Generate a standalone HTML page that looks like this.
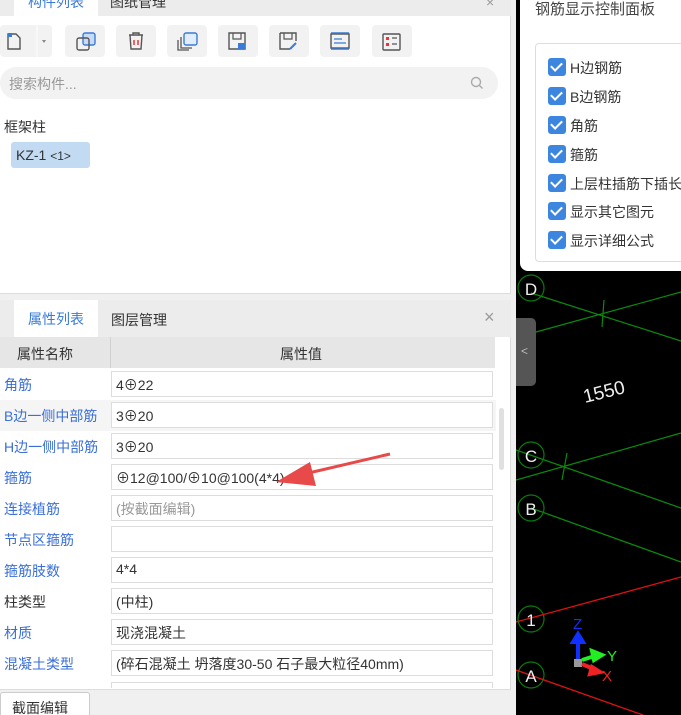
<!DOCTYPE html><html><head><meta charset="utf-8"><style>
*{box-sizing:border-box;margin:0;padding:0}
html{overflow:hidden;width:681px;height:715px}
body{width:681px;height:715px;overflow:hidden;position:relative;background:#000;font-family:"Liberation Sans","Noto Sans CJK SC",sans-serif;font-size:14px;color:#333}
.abs{position:absolute}
.left{left:0;top:0;width:516px;height:715px;background:#f0f0f0}
.p1{left:0;top:0;width:511px;height:294px;background:#fff;border-right:1px solid #ddd;border-bottom:1px solid #ddd}
.tabbar{left:0;width:511px;background:#ececec}
.tab{position:absolute;top:0;height:100%;background:#fff;color:#3a7bd5;font-size:14px;text-align:center}
.btn{position:absolute;top:25px;width:40px;height:32px;background:#f2f2f2;border-radius:4px}
.row{position:absolute;left:0;width:496px;height:31px}
.row .n{position:absolute;left:4px;top:6px;color:#3a6fd8;font-size:14px}
.row .v{position:absolute;left:111px;top:2px;width:382px;height:26px;border:1px solid #ddd;background:#fff;padding:3px 4px;font-size:14px;color:#333}
.cb{position:absolute;left:548px;width:18px;height:18px;background:#3d86e0;border-radius:3px}
.cb::after{content:"";position:absolute;left:5px;top:2px;width:5px;height:9px;border:solid #fff;border-width:0 2px 2px 0;transform:rotate(45deg)}
.cl{position:absolute;left:570px;font-size:14px;color:#333}
</style></head><body>
<div class="abs left"></div>
<div class="abs p1"></div>
<div class="abs tabbar" style="top:0;height:16px"><div class="tab" style="left:14px;width:84px;top:-8px;height:24px;line-height:20px">构件列表</div><span class="abs" style="left:110px;top:-8px;color:#333">图纸管理</span><span class="abs" style="left:486px;top:-6px;color:#999">×</span></div>
<div class="btn" style="left:0;width:52px"><svg width="52" height="32"><path d="M8 9h8l4 4v11H8z" fill="none" stroke="#555" stroke-width="1.4"/><rect x="8" y="8" width="4" height="4" fill="#3a7bd5"/><path d="M42 15l2 3 2-3z" fill="#888"/><line x1="37" y1="0" x2="37" y2="32" stroke="#fff"/></svg></div>
<div class="btn" style="left:65px"><svg width="40" height="32"><rect x="18" y="8" width="12" height="12" rx="2" fill="#c5dbf7" stroke="#3a7bd5" stroke-width="1.4"/><rect x="12" y="13" width="12" height="12" rx="2" fill="none" stroke="#555" stroke-width="1.4"/></svg></div>
<div class="btn" style="left:116px"><svg width="40" height="32"><path d="M13 10h14M17 10v-2h6v2M14 10l1 14h10l1-14" fill="none" stroke="#555" stroke-width="1.4"/><path d="M18 15v5M22 15v5" stroke="#e33" stroke-width="1.5"/></svg></div>
<div class="btn" style="left:167px"><svg width="40" height="32"><rect x="17" y="8" width="13" height="12" rx="2" fill="#e1edfc" stroke="#3a7bd5" stroke-width="1.4"/><path d="M14 12v11h11M11 15v10h11" fill="none" stroke="#555" stroke-width="1.3"/></svg></div>
<div class="btn" style="left:218px"><svg width="40" height="32"><path d="M11 8h16v16H11z" fill="none" stroke="#555" stroke-width="1.4"/><path d="M15 8v6h8V8" fill="none" stroke="#555" stroke-width="1.2"/><rect x="20" y="18" width="7" height="6" fill="#3a7bd5"/></svg></div>
<div class="btn" style="left:269px"><svg width="40" height="32"><path d="M11 8h16v8M11 8v16h10" fill="none" stroke="#555" stroke-width="1.4"/><path d="M15 8v6h8V8" fill="none" stroke="#555" stroke-width="1.2"/><path d="M21 24l6-6" stroke="#3a7bd5" stroke-width="2"/></svg></div>
<div class="btn" style="left:320px"><svg width="40" height="32"><rect x="11" y="9" width="18" height="14" fill="none" stroke="#555" stroke-width="1.4"/><path d="M11 8h18M11 24h18" stroke="#3a7bd5" stroke-width="1.5"/><path d="M14 14h8M14 18h12" stroke="#3a7bd5" stroke-width="1.3"/></svg></div>
<div class="btn" style="left:372px"><svg width="40" height="32"><rect x="11" y="9" width="17" height="16" rx="1" fill="none" stroke="#555" stroke-width="1.4"/><rect x="14" y="12" width="3" height="3" fill="#e33"/><rect x="14" y="18" width="3" height="3" fill="#e33"/><path d="M20 13h5M20 19h5" stroke="#555" stroke-width="1.3"/></svg></div>
<div class="abs" style="left:0;top:67px;width:498px;height:32px;background:#f2f2f2;border-radius:16px"><span class="abs" style="left:9px;top:7px;color:#999;font-size:14px">搜索构件...</span><svg class="abs" style="left:470px;top:9px" width="14" height="14"><circle cx="6" cy="6" r="4.5" fill="none" stroke="#aaa" stroke-width="1.4"/><path d="M9.5 9.5l3 3" stroke="#aaa" stroke-width="1.4"/></svg></div>
<div class="abs" style="left:4px;top:117px;font-size:14px">框架柱</div>
<div class="abs" style="left:11px;top:142px;width:79px;height:26px;background:#c2daf2;border-radius:3px;padding:5px 0 0 5px;font-size:14px">KZ-1 <span style="font-size:12px">&lt;1&gt;</span></div>
<div class="abs" style="left:0;top:300px;width:511px;height:390px;background:#fff;border-right:1px solid #ddd;border-bottom:1px solid #ddd"></div>
<div class="abs tabbar" style="top:300px;height:37px"><div class="tab" style="left:14px;width:84px;line-height:38px">属性列表</div><span class="abs" style="left:111px;top:10px;color:#333">图层管理</span><span class="abs" style="left:484px;top:7px;color:#999;font-size:18px">×</span></div>
<div class="abs" style="left:0;top:337px;width:495px;height:31px;background:#e6e6e6"><span class="abs" style="left:17px;top:7px">属性名称</span><span class="abs" style="left:110px;top:0;width:1px;height:31px;background:#d0d0d0"></span><span class="abs" style="left:280px;top:7px">属性值</span></div>
<div class="abs" style="left:499px;top:408px;width:5px;height:62px;background:#e0e0e0;border-radius:3px"></div>
<div class="row" style="top:369px"><span class="n">角筋</span><div class="v">4⊕22</div></div>
<div class="row" style="top:400px;background:#f5f5f5"><span class="n">B边一侧中部筋</span><div class="v">3⊕20</div></div>
<div class="row" style="top:431px"><span class="n">H边一侧中部筋</span><div class="v">3⊕20</div></div>
<div class="row" style="top:462px"><span class="n">箍筋</span><div class="v">⊕12@100/⊕10@100(4*4)</div></div>
<div class="row" style="top:493px"><span class="n">连接植筋</span><div class="v" style="color:#999">(按截面编辑)</div></div>
<div class="row" style="top:524px"><span class="n">节点区箍筋</span><div class="v"></div></div>
<div class="row" style="top:555px"><span class="n">箍筋肢数</span><div class="v">4*4</div></div>
<div class="row" style="top:586px"><span class="n" style="color:#333">柱类型</span><div class="v">(中柱)</div></div>
<div class="row" style="top:617px"><span class="n">材质</span><div class="v">现浇混凝土</div></div>
<div class="row" style="top:648px"><span class="n">混凝土类型</span><div class="v">(碎石混凝土 坍落度30-50 石子最大粒径40mm)</div></div>
<div class="abs" style="left:111px;top:682px;width:382px;height:6px;border:1px solid #ddd;border-bottom:none"></div>
<div class="abs" style="left:0;top:692px;width:90px;height:23px;background:#fff;border:1px solid #ccc;border-bottom:none;border-radius:3px 3px 0 0;padding:5px 0 0 11px;overflow:hidden">截面编辑</div>
<svg class="abs" style="left:270px;top:450px" width="130" height="40"><path d="M120 4L30 25" stroke="#e84a4a" stroke-width="3"/><path d="M6 32L40 12L46 36z" fill="#e84a4a"/></svg>
<svg class="abs" style="left:516px;top:0" width="165" height="715">
<g stroke="#0b8a0b" stroke-width="1.2" fill="none">
<path d="M15 293L165 341M20 332L165 292M88 300L86 327"/>
<path d="M0 450L165 508M0 480L165 433M51 453L46 480M15 508L165 562"/>
<g stroke="#0a7a0a"><circle cx="15" cy="288" r="13"/><circle cx="15" cy="455" r="13"/><circle cx="15" cy="508" r="13"/><circle cx="15" cy="619" r="13"/><circle cx="15" cy="675" r="13"/></g>
</g>
<path d="M0 622L165 577M0 670L127 715" stroke="#d11" stroke-width="1.3"/>
<g fill="#eee" font-family="Liberation Sans" font-size="17" text-anchor="middle"><text x="15" y="295">D</text><text x="15" y="462">C</text><text x="15" y="515">B</text><text x="15" y="626">1</text><text x="15" y="682">A</text></g>
<text x="69" y="403" fill="#eee" font-family="Liberation Sans" font-size="19" transform="rotate(-14 69 403)">1550</text>
<text x="57" y="629" fill="#1030ff" font-family="Liberation Sans" font-size="15">Z</text>
<path d="M62 660V638M57 642l5-8 5 8z" stroke="#1030ff" stroke-width="4" fill="#1030ff"/>
<rect x="58" y="659" width="8" height="8" fill="#999"/>
<path d="M66 660l16-5M76 651l10 4-8 5z" stroke="#2e2" stroke-width="4" fill="#2e2"/>
<path d="M66 664l14 6M76 667l8 5-10 2z" stroke="#e22" stroke-width="4" fill="#e22"/>
<text x="91" y="661" fill="#2e2" font-family="Liberation Sans" font-size="15">Y</text>
<text x="86" y="681" fill="#e22" font-family="Liberation Sans" font-size="15">X</text>
</svg>
<div class="abs" style="left:516px;top:318px;width:20px;height:68px;background:#555;border-radius:0 5px 5px 0;color:#bbb;font-size:12px;padding:26px 0 0 5px">&lt;</div>
<div class="abs" style="left:520px;top:0;width:161px;height:271px;background:#fff;border-radius:0 0 0 8px"></div>
<div class="abs" style="left:535px;top:-2px;font-size:15px;color:#444">钢筋显示控制面板</div>
<div class="abs" style="left:535px;top:43px;width:150px;height:219px;border:1px solid #ddd;border-radius:4px"></div>
<div class="cb" style="top:58px"></div><div class="cl" style="top:58px">H边钢筋</div>
<div class="cb" style="top:87px"></div><div class="cl" style="top:87px">B边钢筋</div>
<div class="cb" style="top:116px"></div><div class="cl" style="top:116px">角筋</div>
<div class="cb" style="top:145px"></div><div class="cl" style="top:145px">箍筋</div>
<div class="cb" style="top:174px"></div><div class="cl" style="top:174px;white-space:nowrap">上层柱插筋下插长</div>
<div class="cb" style="top:202px"></div><div class="cl" style="top:202px">显示其它图元</div>
<div class="cb" style="top:231px"></div><div class="cl" style="top:231px">显示详细公式</div>
</body></html>
